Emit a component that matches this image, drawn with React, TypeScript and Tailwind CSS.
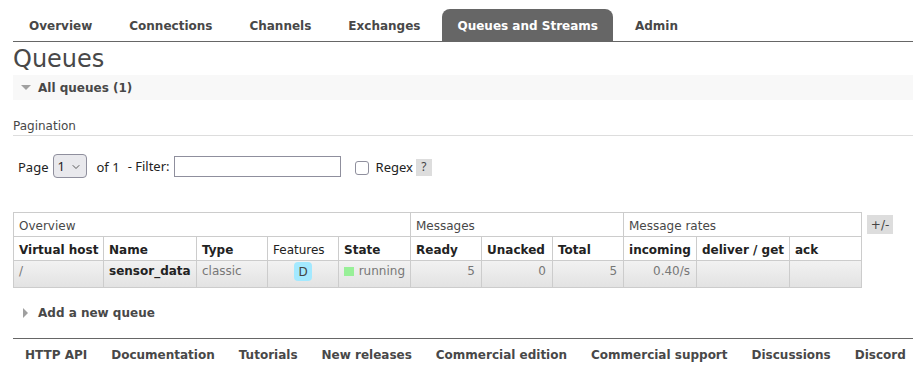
import { ChevronDown } from "lucide-react";

const tabs = ["Overview", "Connections", "Channels", "Exchanges", "Queues and Streams", "Admin"];
const footerLinks = [
  "HTTP API",
  "Documentation",
  "Tutorials",
  "New releases",
  "Commercial edition",
  "Commercial support",
  "Discussions",
  "Discord",
];

const colWidths = [90, 93, 71, 71, 72, 71, 71, 71, 73, 93, 72];

export default function App() {
  return (
    <div className="w-[913px] h-[374px] overflow-hidden bg-white pl-[13px] font-['DejaVu_Sans',sans-serif] text-[12px] text-[#484848] whitespace-nowrap">
      {/* top menu */}
      <nav className="flex gap-[7px] border-b border-[#666] pt-[9px] pl-[1px]">
        {tabs.map((t) => (
          <div
            key={t}
            className={`h-[32px] px-[15px] pt-[2px] flex items-center font-bold ${
              t === "Queues and Streams" ? "bg-[#666] text-white rounded-t-[8px]" : "text-[#484848]"
            }`}
          >
            {t}
          </div>
        ))}
      </nav>

      <h1 className="mt-[3px] text-[24px] leading-[28px] font-normal text-[#484848]">Queues</h1>

      <div className="mt-[2px] h-[25px] bg-[#f8f8f8] flex items-center pl-[8px]">
        <span className="w-0 h-0 border-l-[5px] border-r-[5px] border-t-[5px] border-l-transparent border-r-transparent border-t-[#a0a0a0]" />
        <span className="ml-[7px] font-bold">All queues (1)</span>
      </div>

      <div className="mt-[19px] leading-[14px] pb-[2px] border-b border-[#ddd]">Pagination</div>

      {/* paging controls */}
      <div className="mt-[18px] h-[24px] flex items-center pl-[5px] font-['Noto_Sans',sans-serif] text-[13px] text-[#222]">
        <span className="pt-[4px]">Page</span>
        <div className="ml-[4px] w-[34px] h-[24px] rounded-[4px] border border-[#8f8f9d] bg-[#e9e9ed] flex items-center pl-[4px] gap-[5px] pt-[1px]">
          <span>1</span>
          <ChevronDown size={12} strokeWidth={1.75} className="text-[#444]" />
        </div>
        <span className="ml-[10px] pt-[4px]">of 1</span>
        <span className="ml-[8px] pt-[2px]">- Filter:</span>
        <div className="ml-[4px] w-[167px] h-[21px] border border-[#8f8f9d] bg-white" />
        <div className="ml-[14px] mt-[3px] w-[14px] h-[14px] rounded-[3px] border border-[#8f8f9d] bg-white" />
        <span className="ml-[7px] pt-[4px]">Regex</span>
        <span className="ml-[3px] mt-[2px] w-[16px] h-[17px] bg-[#ddd] flex items-center justify-center text-[12px] text-[#444]">
          ?
        </span>
      </div>

      {/* queue table */}
      <div className="mt-[34px] flex items-start">
        <table className="table-fixed w-[848px] border-collapse">
          <colgroup>
            {colWidths.map((w, i) => (
              <col key={i} style={{ width: w }} />
            ))}
          </colgroup>
          <thead>
            <tr className="h-[24px]">
              <th colSpan={5} className="border border-[#ccc] px-[5px] pt-[2px] text-left font-normal text-[#484848]">
                Overview
              </th>
              <th colSpan={3} className="border border-[#ccc] px-[5px] pt-[2px] text-left font-normal text-[#484848]">
                Messages
              </th>
              <th colSpan={3} className="border border-[#ccc] px-[5px] pt-[2px] text-left font-normal text-[#484848]">
                Message rates
              </th>
            </tr>
            <tr className="h-[24px] text-[#222]">
              <th className="border border-[#ccc] px-[5px] pt-[2px] text-left font-bold">Virtual host</th>
              <th className="border border-[#ccc] px-[5px] pt-[2px] text-left font-bold">Name</th>
              <th className="border border-[#ccc] px-[5px] pt-[2px] text-left font-bold">Type</th>
              <th className="border border-[#ccc] px-[5px] pt-[2px] text-left font-normal">Features</th>
              <th className="border border-[#ccc] px-[5px] pt-[2px] text-left font-bold">State</th>
              <th className="border border-[#ccc] px-[5px] pt-[2px] text-left font-bold">Ready</th>
              <th className="border border-[#ccc] px-[5px] pt-[2px] text-left font-bold">Unacked</th>
              <th className="border border-[#ccc] px-[5px] pt-[2px] text-left font-bold">Total</th>
              <th className="border border-[#ccc] px-[5px] pt-[2px] text-left font-bold">incoming</th>
              <th className="border border-[#ccc] px-[5px] pt-[2px] text-left font-bold">deliver / get</th>
              <th className="border border-[#ccc] px-[5px] pt-[2px] text-left font-bold">ack</th>
            </tr>
          </thead>
          <tbody>
            <tr className="h-[27px] bg-gradient-to-b from-[#f2f2f2] to-[#e2e2e2] text-[#777] leading-[14px]">
              <td className="border border-[#ccc] px-[5px] pt-[3px] align-top">/</td>
              <td className="border border-[#ccc] px-[5px] pt-[3px] align-top font-bold text-[#222]">sensor_data</td>
              <td className="border border-[#ccc] px-[5px] pt-[3px] align-top">classic</td>
              <td className="border border-[#ccc] px-[5px] pt-[1px] align-top text-center">
                <span className="inline-flex w-[18px] h-[19px] rounded-[4px] bg-[#a3e9ff] items-center justify-center text-[#444] text-[12px]">
                  D
                </span>
              </td>
              <td className="border border-[#ccc] px-[5px] pt-[3px] align-top">
                <span className="flex items-center">
                  <span className="w-[10px] h-[9px] bg-[#98f098] mr-[5px]" />
                  running
                </span>
              </td>
              <td className="border border-[#ccc] px-[6px] pt-[3px] align-top text-right">5</td>
              <td className="border border-[#ccc] px-[6px] pt-[3px] align-top text-right">0</td>
              <td className="border border-[#ccc] px-[6px] pt-[3px] align-top text-right">5</td>
              <td className="border border-[#ccc] px-[6px] pt-[3px] align-top text-right">0.40/s</td>
              <td className="border border-[#ccc] px-[5px] pt-[3px] align-top"></td>
              <td className="border border-[#ccc] px-[5px] pt-[3px] align-top"></td>
            </tr>
          </tbody>
        </table>
        <div className="ml-[5px] mt-[3px] w-[26px] h-[19px] bg-[#ddd] flex items-center justify-center text-[#444]">
          +/-
        </div>
      </div>

      <div className="mt-[18px] h-[14px] leading-[14px] flex items-center pl-[10px]">
        <span className="w-0 h-0 border-t-[5px] border-b-[5px] border-l-[5px] border-t-transparent border-b-transparent border-l-[#a0a0a0]" />
        <span className="ml-[10px] font-bold">Add a new queue</span>
      </div>

      <footer className="mt-[18px] border-t border-[#666] pt-[9px] flex">
        {footerLinks.map((l) => (
          <span key={l} className="shrink-0 px-[12px] font-bold leading-[14px]">
            {l}
          </span>
        ))}
      </footer>
    </div>
  );
}
